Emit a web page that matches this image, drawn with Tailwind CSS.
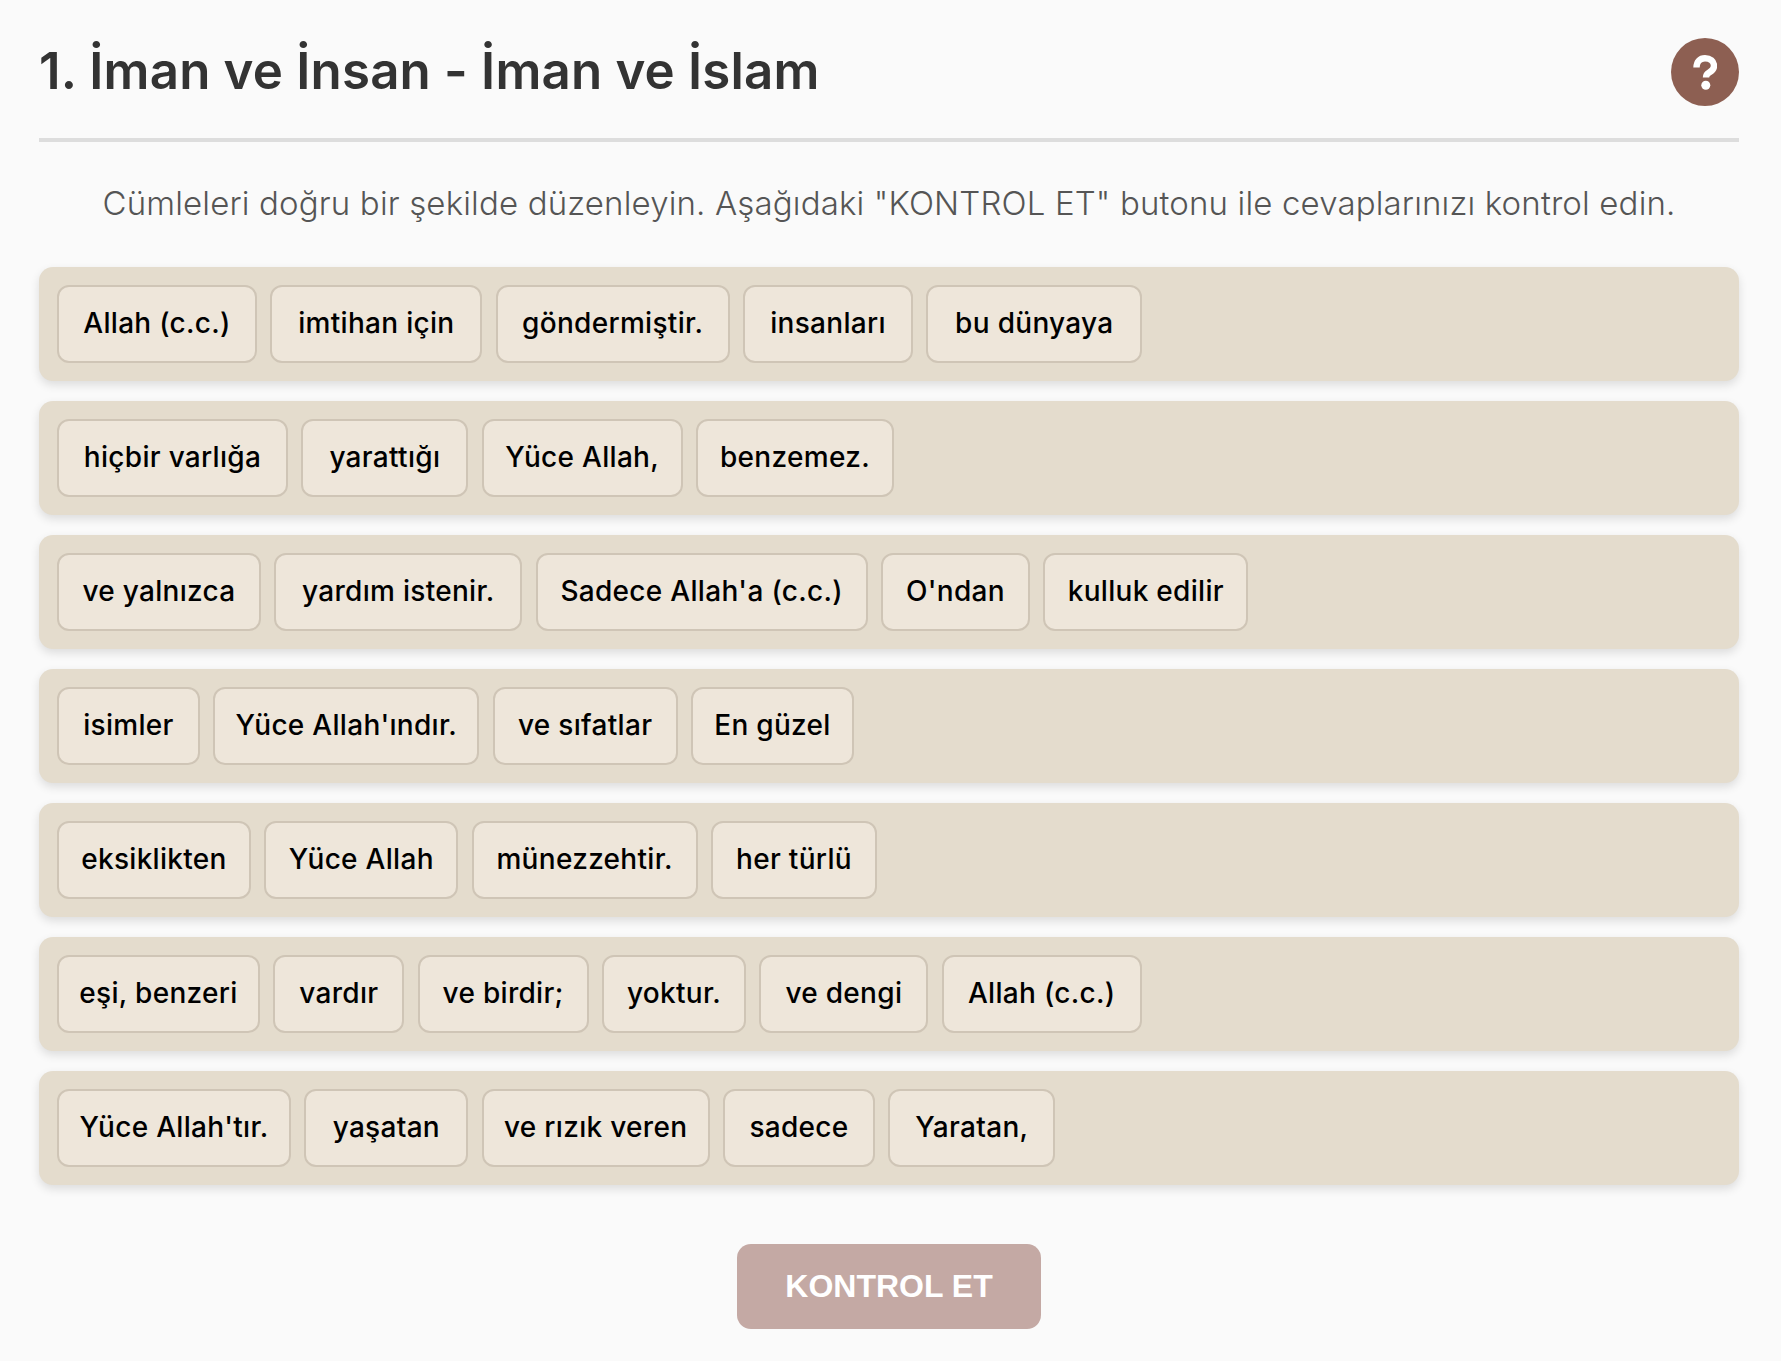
<!DOCTYPE html>
<html lang="tr">
<head>
    <meta charset="UTF-8">
    <title>İman ve İnsan</title>
    <script src="https://cdn.jsdelivr.net/npm/@tailwindcss/browser@4"></script>
</head>
<body class="bg-[#fafafa] font-['Inter',sans-serif] h-[1361px] overflow-hidden">
<div class="pl-[39px] pr-[42px]">
    <!-- header -->
    <div class="flex items-center justify-between h-[142px] pt-[6px] border-b-[4px] border-[#dddddd]">
        <h1 class="text-[51px] leading-none font-semibold text-[#333333] tracking-[0.2px] pb-[4px]">1. İman ve İnsan - İman ve İslam</h1>
        <div class="w-[68px] h-[68px] rounded-full bg-[#8d5f52] flex items-center justify-center">
            <svg width="24" height="35" viewBox="0 0 24 35" fill="none">
                <path d="M3.500 12.500C3.500 6.500 7 3.200 12 3.200s9 3 9 7.800c0 3.500-2.300 5-4.800 6.500-2.200 1.300-3.200 2.400-3.200 5" stroke="#fff" stroke-width="6.400"/>
                <circle cx="12.800" cy="30.300" r="4.500" fill="#fff"/>
            </svg>
        </div>
    </div>

    <p class="text-center text-[33px] leading-[48px] tracking-[0.15px] text-[#555555] font-light mt-[37px] mb-[40px]">Cümleleri doğru bir şekilde düzenleyin. Aşağıdaki "KONTROL ET" butonu ile cevaplarınızı kontrol edin.</p>

    <div class="flex flex-col gap-[20px]">
        <div class="flex gap-[13.33px] py-[18px] pl-[18px] h-[114px] bg-[#e4dccd] rounded-[14px] shadow-[0_4px_10px_rgba(0,0,0,0.12)] text-[28px] tracking-[0.3px] font-medium text-black">
            <span class="w-[200px] pb-[2px] flex items-center justify-center bg-[#eee6da] border-2 border-[#cfc5b6] rounded-[12px]">Allah (c.c.)</span>
            <span class="w-[212px] pb-[2px] flex items-center justify-center bg-[#eee6da] border-2 border-[#cfc5b6] rounded-[12px]">imtihan için</span>
            <span class="w-[234px] pb-[2px] flex items-center justify-center bg-[#eee6da] border-2 border-[#cfc5b6] rounded-[12px]">göndermiştir.</span>
            <span class="w-[170px] pb-[2px] flex items-center justify-center bg-[#eee6da] border-2 border-[#cfc5b6] rounded-[12px]">insanları</span>
            <span class="w-[216px] pb-[2px] flex items-center justify-center bg-[#eee6da] border-2 border-[#cfc5b6] rounded-[12px]">bu dünyaya</span>
        </div>
        <div class="flex gap-[13.33px] py-[18px] pl-[18px] h-[114px] bg-[#e4dccd] rounded-[14px] shadow-[0_4px_10px_rgba(0,0,0,0.12)] text-[28px] tracking-[0.3px] font-medium text-black">
            <span class="w-[231px] pb-[2px] flex items-center justify-center bg-[#eee6da] border-2 border-[#cfc5b6] rounded-[12px]">hiçbir varlığa</span>
            <span class="w-[167px] pb-[2px] flex items-center justify-center bg-[#eee6da] border-2 border-[#cfc5b6] rounded-[12px]">yarattığı</span>
            <span class="w-[201px] pb-[2px] flex items-center justify-center bg-[#eee6da] border-2 border-[#cfc5b6] rounded-[12px]">Yüce Allah,</span>
            <span class="w-[198px] pb-[2px] flex items-center justify-center bg-[#eee6da] border-2 border-[#cfc5b6] rounded-[12px]">benzemez.</span>
        </div>
        <div class="flex gap-[13.33px] py-[18px] pl-[18px] h-[114px] bg-[#e4dccd] rounded-[14px] shadow-[0_4px_10px_rgba(0,0,0,0.12)] text-[28px] tracking-[0.3px] font-medium text-black">
            <span class="w-[204px] pb-[2px] flex items-center justify-center bg-[#eee6da] border-2 border-[#cfc5b6] rounded-[12px]">ve yalnızca</span>
            <span class="w-[248px] pb-[2px] flex items-center justify-center bg-[#eee6da] border-2 border-[#cfc5b6] rounded-[12px]">yardım istenir.</span>
            <span class="w-[332px] pb-[2px] flex items-center justify-center bg-[#eee6da] border-2 border-[#cfc5b6] rounded-[12px]">Sadece Allah'a (c.c.)</span>
            <span class="w-[149px] pb-[2px] flex items-center justify-center bg-[#eee6da] border-2 border-[#cfc5b6] rounded-[12px]">O'ndan</span>
            <span class="w-[205px] pb-[2px] flex items-center justify-center bg-[#eee6da] border-2 border-[#cfc5b6] rounded-[12px]">kulluk edilir</span>
        </div>
        <div class="flex gap-[13.33px] py-[18px] pl-[18px] h-[114px] bg-[#e4dccd] rounded-[14px] shadow-[0_4px_10px_rgba(0,0,0,0.12)] text-[28px] tracking-[0.3px] font-medium text-black">
            <span class="w-[143px] pb-[2px] flex items-center justify-center bg-[#eee6da] border-2 border-[#cfc5b6] rounded-[12px]">isimler</span>
            <span class="w-[266px] pb-[2px] flex items-center justify-center bg-[#eee6da] border-2 border-[#cfc5b6] rounded-[12px]">Yüce Allah'ındır.</span>
            <span class="w-[185px] pb-[2px] flex items-center justify-center bg-[#eee6da] border-2 border-[#cfc5b6] rounded-[12px]">ve sıfatlar</span>
            <span class="w-[163px] pb-[2px] flex items-center justify-center bg-[#eee6da] border-2 border-[#cfc5b6] rounded-[12px]">En güzel</span>
        </div>
        <div class="flex gap-[13.33px] py-[18px] pl-[18px] h-[114px] bg-[#e4dccd] rounded-[14px] shadow-[0_4px_10px_rgba(0,0,0,0.12)] text-[28px] tracking-[0.3px] font-medium text-black">
            <span class="w-[194px] pb-[2px] flex items-center justify-center bg-[#eee6da] border-2 border-[#cfc5b6] rounded-[12px]">eksiklikten</span>
            <span class="w-[194px] pb-[2px] flex items-center justify-center bg-[#eee6da] border-2 border-[#cfc5b6] rounded-[12px]">Yüce Allah</span>
            <span class="w-[226px] pb-[2px] flex items-center justify-center bg-[#eee6da] border-2 border-[#cfc5b6] rounded-[12px]">münezzehtir.</span>
            <span class="w-[166px] pb-[2px] flex items-center justify-center bg-[#eee6da] border-2 border-[#cfc5b6] rounded-[12px]">her türlü</span>
        </div>
        <div class="flex gap-[13.33px] py-[18px] pl-[18px] h-[114px] bg-[#e4dccd] rounded-[14px] shadow-[0_4px_10px_rgba(0,0,0,0.12)] text-[28px] tracking-[0.3px] font-medium text-black">
            <span class="w-[203px] pb-[2px] flex items-center justify-center bg-[#eee6da] border-2 border-[#cfc5b6] rounded-[12px]">eşi, benzeri</span>
            <span class="w-[131px] pb-[2px] flex items-center justify-center bg-[#eee6da] border-2 border-[#cfc5b6] rounded-[12px]">vardır</span>
            <span class="w-[171px] pb-[2px] flex items-center justify-center bg-[#eee6da] border-2 border-[#cfc5b6] rounded-[12px]">ve birdir;</span>
            <span class="w-[144px] pb-[2px] flex items-center justify-center bg-[#eee6da] border-2 border-[#cfc5b6] rounded-[12px]">yoktur.</span>
            <span class="w-[169px] pb-[2px] flex items-center justify-center bg-[#eee6da] border-2 border-[#cfc5b6] rounded-[12px]">ve dengi</span>
            <span class="w-[200px] pb-[2px] flex items-center justify-center bg-[#eee6da] border-2 border-[#cfc5b6] rounded-[12px]">Allah (c.c.)</span>
        </div>
        <div class="flex gap-[13.33px] py-[18px] pl-[18px] h-[114px] bg-[#e4dccd] rounded-[14px] shadow-[0_4px_10px_rgba(0,0,0,0.12)] text-[28px] tracking-[0.3px] font-medium text-black">
            <span class="w-[234px] pb-[2px] flex items-center justify-center bg-[#eee6da] border-2 border-[#cfc5b6] rounded-[12px]">Yüce Allah'tır.</span>
            <span class="w-[164px] pb-[2px] flex items-center justify-center bg-[#eee6da] border-2 border-[#cfc5b6] rounded-[12px]">yaşatan</span>
            <span class="w-[228px] pb-[2px] flex items-center justify-center bg-[#eee6da] border-2 border-[#cfc5b6] rounded-[12px]">ve rızık veren</span>
            <span class="w-[152px] pb-[2px] flex items-center justify-center bg-[#eee6da] border-2 border-[#cfc5b6] rounded-[12px]">sadece</span>
            <span class="w-[167px] pb-[2px] flex items-center justify-center bg-[#eee6da] border-2 border-[#cfc5b6] rounded-[12px]">Yaratan,</span>
        </div>
    </div>

    <div class="flex justify-center mt-[59px]">
        <button class="w-[304px] h-[85px] pb-[2px] rounded-[14px] bg-[#c4a9a4] text-white font-['Liberation_Sans',sans-serif] font-bold text-[32px] leading-none">KONTROL ET</button>
    </div>
</div>
</body>
</html>
